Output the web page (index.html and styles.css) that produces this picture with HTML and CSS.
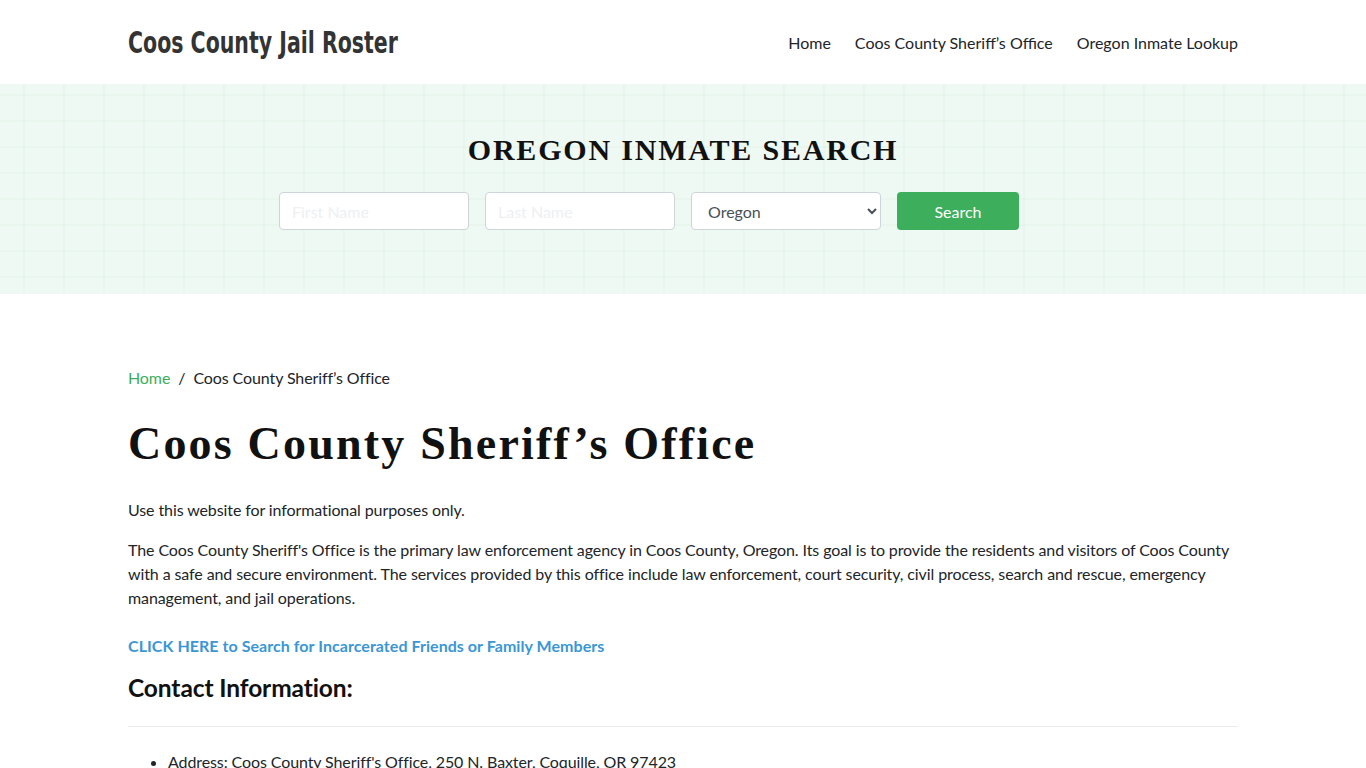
FILE: index.html
```html
<!DOCTYPE html>
<html lang="en">
<head>
    <meta charset="UTF-8">
    <meta name="viewport" content="width=device-width, initial-scale=1.0">
    <title>Coos County Sheriff's Office</title>
    <link rel="stylesheet" href="styles.css">
</head>
<body>
    <header class="site-header">
        <div class="container header-inner">
            <a class="logo" href="#">Coos County Jail Roster</a>
            <nav class="main-nav">
                <a href="#">Home</a>
                <a href="#">Coos County Sheriff’s Office</a>
                <a href="#">Oregon Inmate Lookup</a>
            </nav>
        </div>
    </header>

    <section class="hero">
        <h2 class="hero-title">OREGON INMATE SEARCH</h2>
        <form class="search-form">
            <input type="text" placeholder="First Name">
            <input type="text" placeholder="Last Name">
            <select>
                <option>Oregon</option>
            </select>
            <button type="button" class="btn">Search</button>
        </form>
    </section>

    <main class="container content">
        <div class="breadcrumb">
            <a href="#">Home</a><span class="sep">/</span><span>Coos County Sheriff’s Office</span>
        </div>

        <h1>Coos County Sheriff’s Office</h1>

        <p>Use this website for informational purposes only.</p>
        <p>The Coos County Sheriff's Office is the primary law enforcement agency in Coos County, Oregon. Its goal is to provide the residents and visitors of Coos County with a safe and secure environment. The services provided by this office include law enforcement, court security, civil process, search and rescue, emergency management, and jail operations.</p>

        <a class="cta" href="#">CLICK HERE to Search for Incarcerated Friends or Family Members</a>

        <h3>Contact Information:</h3>
        <hr>
        <ul>
            <li>Address: Coos County Sheriff's Office, 250 N. Baxter, Coquille, OR 97423</li>
            <li>Phone: (541) 396-7800</li>
        </ul>
    </main>
</body>
</html>
```

FILE: styles.css
```css
body {
    margin: 0;
    font-family: 'Lato', 'Liberation Sans', sans-serif;
    font-size: 16px;
    line-height: 1.5;
    letter-spacing: -0.1px;
    color: #212529;
    background: #fff;
}

a {
    text-decoration: none;
}

.container {
    width: 1110px;
    margin: 0 auto;
}

.site-header {
    height: 84px;
    background: #fff;
}

.header-inner {
    height: 100%;
    display: flex;
    align-items: center;
    justify-content: space-between;
}

.logo {
    display: inline-block;
    width: 270px;
    white-space: nowrap;
    font-family: 'DejaVu Sans Condensed', 'DejaVu Sans', sans-serif;
    font-stretch: condensed;
    font-weight: 700;
    font-size: 30px;
    letter-spacing: 0;
    color: #333;
    transform: scaleX(0.76);
    transform-origin: left center;
}

.main-nav {
    display: flex;
    gap: 24px;
    padding-top: 2px;
}

.main-nav a {
    color: #212529;
    font-size: 16px;
    letter-spacing: 0;
}

.hero {
    height: 210px;
    box-sizing: border-box;
    padding-top: 48px;
    background-color: #edf9f2;
    background-image:
        linear-gradient(90deg, rgba(180, 210, 190, 0.09) 2px, transparent 2px),
        linear-gradient(0deg, rgba(180, 210, 190, 0.09) 2px, transparent 2px);
    background-size: 40px 26px;
    background-position: 23px 12px;
    text-align: center;
}

.hero-title {
    margin: 0 0 24px;
    font-family: 'Liberation Serif', 'Times New Roman', serif;
    font-weight: 700;
    font-size: 30px;
    line-height: 36px;
    letter-spacing: 1.8px;
    color: #111;
}

.search-form {
    display: flex;
    justify-content: center;
    gap: 16px;
    padding-right: 68px;
}

.search-form input,
.search-form select {
    width: 190px;
    height: 38px;
    box-sizing: border-box;
    padding: 6px 12px;
    border: 1px solid #ced4da;
    border-radius: 4px;
    background: #fff;
    font-family: 'Lato', sans-serif;
    font-size: 16px;
    color: #495057;
}

.search-form input::placeholder {
    color: #eef0f2;
    opacity: 1;
}

.btn {
    width: 122px;
    height: 38px;
    border: none;
    border-radius: 4px;
    background: #3cae5c;
    color: #fff;
    font-family: 'Lato', sans-serif;
    font-size: 16px;
}

.content {
    padding-top: 72px;
}

.breadcrumb {
    font-size: 16px;
    margin-bottom: 28px;
}

.breadcrumb a {
    color: #3cae5c;
}

.breadcrumb .sep {
    padding: 0 8px;
}

h1 {
    margin: 0 0 28px;
    font-family: 'Liberation Serif', 'Times New Roman', serif;
    font-weight: 700;
    font-size: 46px;
    line-height: 52px;
    letter-spacing: 2.2px;
    color: #111;
}

p {
    margin: 0 0 16px;
}

.cta {
    display: block;
    margin-top: 24px;
    font-weight: 700;
    letter-spacing: 0.05px;
    color: #3a97d4;
}

h3 {
    margin: 12px 0 0;
    font-size: 24.5px;
    font-weight: 700;
    line-height: 36px;
    color: #111;
}

hr {
    margin: 20px 0 0;
    border: 0;
    border-top: 1px solid #e9ecef;
}

ul {
    margin: 23px 0 0;
    padding-left: 40px;
}
```
